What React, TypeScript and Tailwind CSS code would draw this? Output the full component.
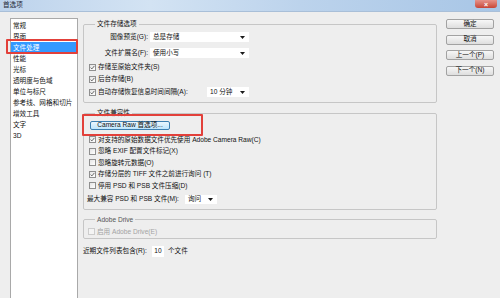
import type { ReactNode } from "react";

const categories = [
  "常规",
  "界面",
  "文件处理",
  "性能",
  "光标",
  "透明度与色域",
  "单位与标尺",
  "参考线、网格和切片",
  "增效工具",
  "文字",
  "3D",
];

function Triangle() {
  return (
    <svg width="5" height="3" viewBox="0 0 5 3" className="shrink-0">
      <path d="M0 0h5L2.5 3z" fill="#1a1a1a" />
    </svg>
  );
}

function Select({ value, className = "" }: { value: string; className?: string }) {
  return (
    <div className={`flex items-center justify-between bg-white pl-[3px] pr-[4px] ${className}`}>
      <span>{value}</span>
      <Triangle />
    </div>
  );
}

function CheckBox({ checked, disabled }: { checked?: boolean; disabled?: boolean }) {
  return (
    <span
      className={`flex h-[7px] w-[7px] shrink-0 items-center justify-center border ${
        disabled ? "border-[#cdcdcd] bg-[#f4f4f4]" : "border-[#8f8f8f] bg-gradient-to-br from-[#e4e4e4] to-white"
      }`}
    >
      {checked && (
        <svg width="5" height="5" viewBox="0 0 5 5">
          <path d="M0.6 2.6 1.9 3.9 4.4 0.9" fill="none" stroke="#5a5a5a" strokeWidth="0.9" />
        </svg>
      )}
    </span>
  );
}

function CheckRow({ label, checked, disabled, className = "" }: { label: string; checked?: boolean; disabled?: boolean; className?: string }) {
  return (
    <div className={`flex items-center gap-[2px] ${className}`}>
      <CheckBox checked={checked} disabled={disabled} />
      <span className={`whitespace-nowrap ${disabled ? "text-[#a3a3a3]" : ""}`}>{label}</span>
    </div>
  );
}

function Group({ title, children, className = "", muted }: { title: string; children: ReactNode; className?: string; muted?: boolean }) {
  return (
    <fieldset className={`rounded-[2px] border border-[#c6c6c6] ${className}`}>
      <legend className={`ml-[11px] px-[2px] leading-[10px] ${muted ? "text-[#555]" : ""}`}>{title}</legend>
      {children}
    </fieldset>
  );
}

function DialogButton({ label }: { label: string }) {
  return (
    <div className="flex h-[10px] items-center justify-center rounded-[2px] border border-[#a2a2a2] bg-gradient-to-b from-[#f7f7f7] to-[#dedede] leading-none">
      {label}
    </div>
  );
}

export default function App() {
  return (
    <div className="relative flex h-[298px] w-[500px] flex-col overflow-hidden bg-[#eeeeee] font-['Liberation_Sans','Noto_Sans_CJK_SC',sans-serif] text-[6.6px] leading-[10px] text-[#111]">
      {/* title bar */}
      <div className="flex h-[12px] shrink-0 items-start justify-between border-b border-[#a9bfd8] bg-[linear-gradient(90deg,#bdd3ec_0%,#d3e3f3_30%,#bcd3ec_60%,#a8c6e6_100%)] pl-[3px] pr-[3px]">
        <span className="text-[#1f2a36]">首选项</span>
        <div className="flex h-[8px] w-[22px] items-center justify-center rounded-b-[3px] bg-gradient-to-b from-[#e5928a] to-[#c74436] text-[7px] font-bold leading-none text-white">
          ×
        </div>
      </div>

      <div className="flex flex-1 pl-[10px] pt-[6px]">
        {/* category list */}
        <div className="-mb-[4px] w-[68px] shrink-0 border border-[#a9a9a9] bg-white pt-px">
          {categories.map((c) => (
            <div key={c} className={`h-[11px] whitespace-nowrap pl-[2px] leading-[11px] ${c === "文件处理" ? "bg-[#3399ff] text-white" : ""}`}>
              {c}
            </div>
          ))}
        </div>

        {/* settings */}
        <div className="ml-[5px] mt-[1px] w-[354px] shrink-0">
          <Group title="文件存储选项">
            <div className="pb-[5px] pt-[3px]">
              <div className="flex h-[10px] items-center">
                <span className="w-[64px] text-right">图像预览(G):</span>
                <Select value="总是存储" className="ml-[2px] h-[10px] w-[99px]" />
              </div>
              <div className="mt-[6px] flex h-[10px] items-center">
                <span className="w-[64px] text-right">文件扩展名(F):</span>
                <Select value="使用小写" className="ml-[2px] h-[10px] w-[99px]" />
              </div>
              <CheckRow label="存储至原始文件夹(S)" checked className="mt-[4px] h-[10px] pl-[5px]" />
              <CheckRow label="后台存储(B)" checked className="mt-[2px] h-[10px] pl-[5px]" />
              <div className="mt-[3px] flex h-[10px] items-center pl-[5px]">
                <CheckRow label="自动存储恢复信息时间间隔(A):" checked className="w-[118px]" />
                <Select value="10 分钟" className="h-[10px] w-[42px]" />
              </div>
            </div>
          </Group>

          <Group title="文件兼容性" className="mt-[5px]">
            <div className="pb-[5px] pt-[3px]">
              <div className="ml-[6px] flex h-[9px] w-[80px] items-center justify-center rounded-[2px] border border-[#3c7fb1] bg-gradient-to-b from-[#eaf6fd] to-[#bee6fd] leading-none">
                Camera Raw 首选项...
              </div>
              <div className="mt-[4px] pl-[5px]">
                <CheckRow label="对支持的原始数据文件优先使用 Adobe Camera Raw(C)" checked className="h-[11.5px]" />
                <CheckRow label="忽略 EXIF 配置文件标记(X)" className="h-[11.5px]" />
                <CheckRow label="忽略旋转元数据(O)" className="h-[11.5px]" />
                <CheckRow label="存储分层的 TIFF 文件之前进行询问 (T)" checked className="h-[11.5px]" />
                <CheckRow label="停用 PSD 和 PSB 文件压缩(D)" className="h-[11.5px]" />
              </div>
              <div className="mt-[3px] flex h-[9px] items-center pl-[3px]">
                <span className="w-[98px] whitespace-nowrap">最大兼容 PSD 和 PSB 文件(M):</span>
                <Select value="询问" className="h-[9px] w-[32px]" />
              </div>
            </div>
          </Group>

          <Group title="Adobe Drive" muted className="mt-[5px]">
            <div className="pb-[1px] pt-[2px]">
              <CheckRow label="启用 Adobe Drive(E)" disabled className="h-[10px] pl-[4px]" />
            </div>
          </Group>

          <div className="mt-[7px] flex h-[11px] items-center">
            <span className="w-[69px] whitespace-nowrap">近期文件列表包含(R):</span>
            <div className="flex h-[11px] w-[12px] items-center justify-center bg-white">10</div>
            <span className="ml-[4px]">个文件</span>
          </div>
        </div>

        {/* buttons */}
        <div className="ml-[9px] mt-[1px] flex w-[48px] shrink-0 flex-col gap-[5.5px]">
          <DialogButton label="确定" />
          <DialogButton label="取消" />
          <DialogButton label="上一个(P)" />
          <DialogButton label="下一个(N)" />
        </div>
      </div>

      {/* red annotation boxes */}
      <div className="absolute left-[6px] top-[39px] h-[15px] w-[72px] rounded-[1px] border-2 border-[#e2403a]" />
      <div className="absolute left-[82px] top-[114px] h-[22px] w-[121px] rounded-[1px] border-2 border-[#e2403a]" />
    </div>
  );
}
